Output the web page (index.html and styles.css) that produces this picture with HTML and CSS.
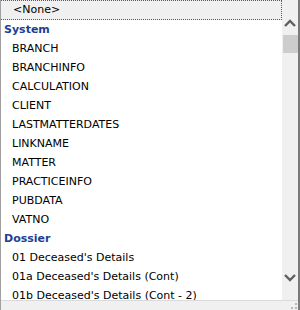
FILE: index.html
```html
<!DOCTYPE html>
<html lang="en">
<head>
  <meta charset="UTF-8">
  <title>Field Picker</title>
  <link rel="stylesheet" href="styles.css">
</head>
<body>

  <div class="picker">
    <div class="picker-main">
      <ul class="field-list">
        <li class="item none-item">&lt;None&gt;</li>
        <li class="group">System</li>
        <li class="item">BRANCH</li>
        <li class="item">BRANCHINFO</li>
        <li class="item">CALCULATION</li>
        <li class="item">CLIENT</li>
        <li class="item">LASTMATTERDATES</li>
        <li class="item">LINKNAME</li>
        <li class="item">MATTER</li>
        <li class="item">PRACTICEINFO</li>
        <li class="item">PUBDATA</li>
        <li class="item">VATNO</li>
        <li class="group">Dossier</li>
        <li class="item">01 Deceased's Details</li>
        <li class="item">01a Deceased's Details (Cont)</li>
        <li class="item last-item">01b Deceased's Details (Cont - 2)</li>
      </ul>
      <div class="scrollbar">
        <svg class="arrow" width="16" height="10" viewBox="0 0 16 10">
          <path d="M3 8 L8 3 L13 8" fill="none" stroke="#606060" stroke-width="2.4"/>
        </svg>
        <div class="thumb"></div>
        <div class="track"></div>
        <svg class="arrow" width="16" height="10" viewBox="0 0 16 10">
          <path d="M3 2 L8 7 L13 2" fill="none" stroke="#606060" stroke-width="2.4"/>
        </svg>
        <div class="scroll-end"></div>
      </div>
    </div>
    <div class="status-bar">
      <svg class="grip" width="8" height="8" viewBox="0 0 8 8">
        <rect x="5" y="1" width="2" height="2" fill="#b8b8b8"/>
        <rect x="1" y="5" width="2" height="2" fill="#b8b8b8"/>
        <rect x="5" y="5" width="2" height="2" fill="#b8b8b8"/>
      </svg>
    </div>
  </div>

</body>
</html>
```

FILE: styles.css
```css
body { margin: 0; background: #fff; }
.picker {
  width: 300px;
  height: 310px;
  box-sizing: border-box;
  border-left: 1px solid #a0a0a0;
  border-right: 2px solid #7a7a7a;
  display: flex;
  flex-direction: column;
  font-family: "DejaVu Sans", Verdana, sans-serif;
  font-size: 11px;
  color: #000;
}
.picker-main {
  flex: 1;
  display: flex;
  min-height: 0;
}
.field-list {
  flex: 1;
  margin: 0;
  padding: 0;
  list-style: none;
  overflow: hidden;
}
.field-list li {
  height: 19px;
  line-height: 19px;
  white-space: nowrap;
}
.item { padding-left: 11px; }
.field-list .last-item {
  height: 11px;
  line-height: 11px;
  padding-top: 4px;
}
.field-list .none-item {
  background: #f0f0f0;
  border: 1px dotted #5a5a5a;
  border-left: none;
  height: 18px;
  line-height: 18px;
  padding-left: 12px;
}
.group {
  padding-left: 3px;
  font-weight: bold;
  color: #1c3f94;
}
.scrollbar {
  width: 16px;
  background: #f0f0f0;
  display: flex;
  flex-direction: column;
  align-items: center;
  padding-top: 18px;
}
.arrow { display: block; flex-shrink: 0; }
.thumb {
  width: 15px;
  height: 18px;
  margin-top: 7px;
  background: #cdcdcd;
}
.track { flex: 1; }
.scroll-end { height: 17px; }
.status-bar {
  height: 9px;
  background: #f0f0f0;
  border-top: 1px solid #dadada;
  display: flex;
  justify-content: flex-end;
  align-items: flex-end;
}
.grip { display: block; }
```
